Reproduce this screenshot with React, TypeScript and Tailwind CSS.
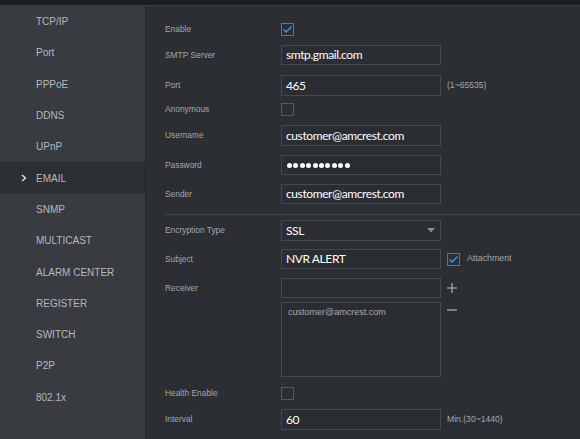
import React from "react";

const menu = [
  "TCP/IP",
  "Port",
  "PPPoE",
  "DDNS",
  "UPnP",
  "EMAIL",
  "SNMP",
  "MULTICAST",
  "ALARM CENTER",
  "REGISTER",
  "SWITCH",
  "P2P",
  "802.1x",
];

function Checkbox({ checked = false }: { checked?: boolean }) {
  return (
    <div
      className={
        "w-[13px] h-[13px] border flex items-center justify-center " +
        (checked ? "border-[#1f86d6]" : "border-[#55585d]")
      }
    >
      {checked && (
        <svg width="11" height="9" viewBox="0 0 11 9">
          <path d="M1.5 4.5 L4.2 7 L9.5 1.5" fill="none" stroke="#2a9bf0" strokeWidth="1.4" />
        </svg>
      )}
    </div>
  );
}

function Field({
  value,
  className = "h-[20px]",
  children,
}: {
  value?: string;
  className?: string;
  children?: React.ReactNode;
}) {
  return (
    <div
      className={
        "w-[160px] border border-[#45484e] bg-[#2a2d31] flex items-center pl-[4px] text-[12px] tracking-[-0.4px] text-white font-['Lato',sans-serif] " +
        className
      }
    >
      {value}
      {children}
    </div>
  );
}

function Label({ children }: { children: React.ReactNode }) {
  return <div className="w-[116px] shrink-0 text-[8.4px] text-[#a4a7ac]">{children}</div>;
}

function Row({ className, children }: { className: string; children: React.ReactNode }) {
  return <div className={"flex items-center " + className}>{children}</div>;
}

export default function App() {
  return (
    <div className="w-[580px] h-[439px] bg-[#1b1e22] flex flex-col overflow-hidden font-['Liberation_Sans',Arial,sans-serif]">
      <div className="h-[5px] shrink-0" />
      <div className="flex flex-1 border-t border-[#3b3e43]">
        <aside className="w-[146px] shrink-0 bg-[#383b40] border-r border-[#24272b]">
          {menu.map((m) => (
            <div
              key={m}
              className={
                "h-[31.3px] flex items-center text-[10px] text-[#b6b9be] " +
                (m === "EMAIL" ? "bg-[#2c2f34]" : "")
              }
            >
              <div className="w-[36px] flex justify-end pr-[9px]">
                {m === "EMAIL" && (
                  <svg width="6" height="8" viewBox="0 0 6 8">
                    <path d="M1 1 L4.5 4 L1 7" fill="none" stroke="#e6e8ea" strokeWidth="1.3" />
                  </svg>
                )}
              </div>
              {m}
            </div>
          ))}
        </aside>
        <main className="flex-1 bg-[#2b2e33] pt-[17px] pl-[19px] flex flex-col">
          <Row className="h-[13px]">
            <Label>Enable</Label>
            <Checkbox checked />
          </Row>
          <Row className="mt-[9px]">
            <Label>SMTP Server</Label>
            <Field value="smtp.gmail.com" />
          </Row>
          <Row className="mt-[10px]">
            <Label>Port</Label>
            <Field value="465" className="h-[21px]" />
            <span className="ml-[6px] text-[8.6px] text-[#a4a7ac]">(1~65535)</span>
          </Row>
          <Row className="mt-[7px] h-[13px]">
            <Label>Anonymous</Label>
            <Checkbox />
          </Row>
          <Row className="mt-[9px]">
            <Label>Username</Label>
            <Field value="customer@amcrest.com" className="h-[21px]" />
          </Row>
          <Row className="mt-[9px]">
            <Label>Password</Label>
            <Field>
              <div className="flex gap-[1.4px] ml-[1px]">
                {Array.from({ length: 10 }).map((_, i) => (
                  <span key={i} className="w-[5px] h-[5px] rounded-full bg-white" />
                ))}
              </div>
            </Field>
          </Row>
          <Row className="mt-[9px]">
            <Label>Sender</Label>
            <Field value="customer@amcrest.com" />
          </Row>
          <div className="mt-[10px] h-px bg-[#44474c]" />
          <Row className="mt-[5px]">
            <Label>Encryption Type</Label>
            <div className="relative">
              <Field value="SSL" className="h-[21px]" />
              <svg className="absolute right-[6px] top-[8px]" width="8" height="5" viewBox="0 0 8 5">
                <path d="M0 0 L8 0 L4 4.5 Z" fill="#8a8d92" />
              </svg>
            </div>
          </Row>
          <Row className="mt-[8px]">
            <Label>Subject</Label>
            <Field value="NVR ALERT" />
            <div className="ml-[6px]">
              <Checkbox checked />
            </div>
            <span className="ml-[7px] text-[8.8px] text-[#a4a7ac]">Attachment</span>
          </Row>
          <Row className="mt-[9px]">
            <Label>Receiver</Label>
            <Field />
            <svg className="ml-[6px]" width="10" height="10" viewBox="0 0 10 10">
              <path d="M5 0 V10 M0 5 H10" stroke="#8e9196" strokeWidth="1.6" />
            </svg>
          </Row>
          <div className="mt-[4px] flex">
            <div className="w-[116px] shrink-0" />
            <div className="w-[160px] h-[75px] border border-[#45484e] bg-[#2a2d31] pl-[6px] pt-[3px] text-[9px] text-[#a9acb1]">
              customer@amcrest.com
            </div>
            <svg className="ml-[6px] mt-[7px]" width="10" height="2" viewBox="0 0 10 2">
              <path d="M0 1 H10" stroke="#8e9196" strokeWidth="1.6" />
            </svg>
          </div>
          <Row className="mt-[10px] h-[13px]">
            <Label>Health Enable</Label>
            <Checkbox />
          </Row>
          <Row className="mt-[9px]">
            <Label>Interval</Label>
            <Field value="60" className="h-[21px]" />
            <span className="ml-[6px] text-[8.6px] text-[#a4a7ac]">Min.(30~1440)</span>
          </Row>
        </main>
      </div>
    </div>
  );
}
